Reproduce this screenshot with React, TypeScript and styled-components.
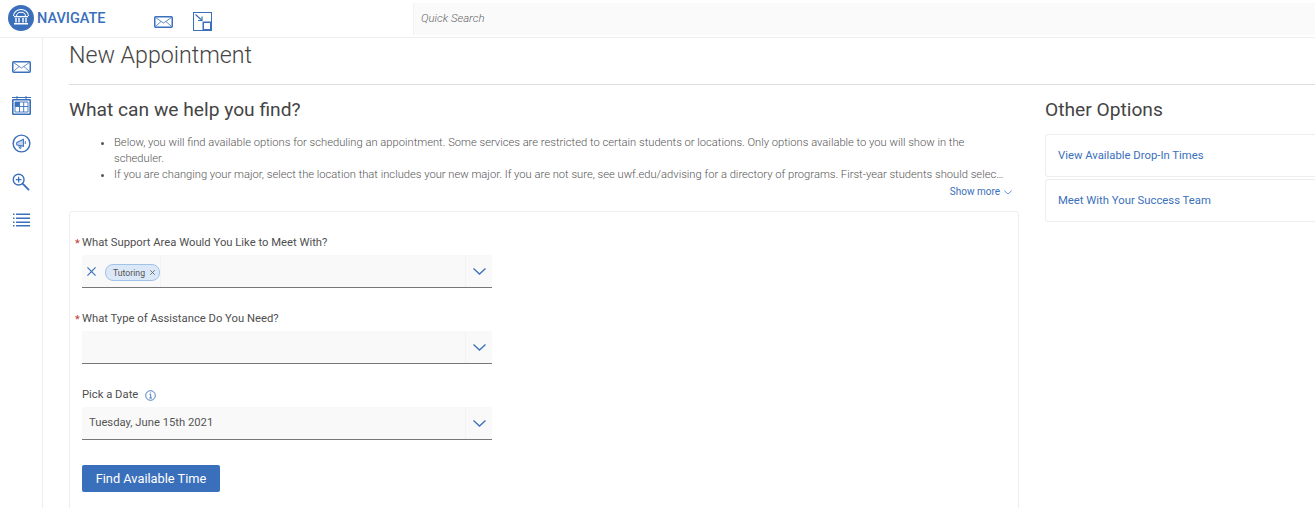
import React from 'react';
import styled, { createGlobalStyle } from 'styled-components';

const Global = createGlobalStyle`
  html, body {
    margin: 0;
    padding: 0;
    background: #fff;
    overflow: hidden;
  }
  body {
    font-family: Roboto, "Liberation Sans", sans-serif;
  }
`;

const BLUE = '#3a70bb';

const Page = styled.div`
  width: 1315px;
  height: 508px;
  overflow: hidden;
  display: flex;
  flex-direction: column;
`;

const TopBar = styled.header`
  height: 37px;
  flex: none;
  display: flex;
  align-items: flex-start;
  border-bottom: 1px solid #eeeeee;
`;

const Brand = styled.div`
  width: 154px;
  flex: none;
  height: 36px;
  padding: 5px 0 0 8px;
  box-sizing: border-box;
  display: flex;
  align-items: flex-start;
  gap: 3px;
`;

const BrandName = styled.span`
  font-size: 14.5px;
  font-weight: 500;
  color: ${BLUE};
  line-height: 27px;
`;

const TopIcons = styled.div`
  width: 259px;
  flex: none;
  display: flex;
  gap: 20px;
  padding-top: 12px;
  align-items: flex-start;
`;

const TopMail = styled.span`
  display: block;
  padding-top: 4px;
  line-height: 0;
`;

const Search = styled.div`
  width: 902px;
  height: 32px;
  margin-top: 3px;
  padding-left: 7px;
  box-sizing: border-box;
  background: #fafafa;
  border-left: 1px solid #f2f2f2;
  font-size: 11.4px;
  font-style: italic;
  font-weight: 300;
  color: #666;
  line-height: 31px;
`;

const Body = styled.div`
  flex: 1;
  display: flex;
  min-height: 0;
`;

const Rail = styled.nav`
  width: 42px;
  flex: none;
  border-right: 1px solid #eeeeee;
  padding-top: 19px;
  display: flex;
  flex-direction: column;
  align-items: center;
  gap: 18.3px;
`;

const RailSlot = styled.div`
  height: 20px;
  display: flex;
  align-items: center;
  justify-content: center;
`;

const Main = styled.main`
  flex: 1;
  padding: 0 0 0 26px;
  min-width: 0;
`;

const Title = styled.h1`
  margin: 0;
  height: 46px;
  border-bottom: 1px solid #dddddd;
  font-size: 23.2px;
  font-weight: 300;
  line-height: 34px;
  color: #444;
`;

const Columns = styled.div`
  display: flex;
  gap: 26px;
`;

const Left = styled.section`
  width: 950px;
  flex: none;
`;

const Right = styled.aside`
  flex: 1;
`;

const SectionTitle = styled.h2`
  margin: 0;
  padding-top: 13px;
  font-size: 19.2px;
  font-weight: 400;
  line-height: 24px;
  color: #444;
`;

const Notes = styled.ul`
  margin: 13px 0 0;
  padding: 0 30px 0 45px;
  font-size: 11.2px;
  font-weight: 300;
  line-height: 16px;
  color: #555;
`;

const Note = styled.li<{ $nowrap?: boolean }>`
  ${(p) => p.$nowrap && 'white-space: nowrap;'}
`;

const ShowMore = styled.div`
  display: flex;
  justify-content: flex-end;
  align-items: center;
  gap: 4px;
  padding-right: 7px;
  font-size: 10px;
  line-height: 14px;
  margin-top: 2px;
  color: ${BLUE};
`;

const FormCard = styled.div`
  margin-top: 12px;
  height: 320px;
  box-sizing: border-box;
  border: 1px solid #eeeeee;
  border-radius: 3px;
  padding: 23px 12px;
`;

const Field = styled.div<{ $gap?: number }>`
  width: 410px;
  margin-bottom: ${(p) => p.$gap ?? 23}px;
`;

const Label = styled.div<{ $required?: boolean }>`
  position: relative;
  font-size: 11.25px;
  line-height: 16px;
  color: #4f4f4f;
  display: flex;
  align-items: center;
  gap: 7px;
  ${(p) => p.$required && `
    &::before {
      content: '*';
      position: absolute;
      left: -7px;
      top: 1px;
      color: #c0392b;
      font-size: 11px;
    }
  `}
`;

const SelectBox = styled.div`
  height: 33px;
  margin-top: 4px;
  box-sizing: border-box;
  background: #f9f9f9;
  border-bottom: 1px solid #777;
  display: flex;
  align-items: center;
  font-size: 11.25px;
  color: #555;
`;

const SelectValue = styled.div`
  flex: 1;
  height: 100%;
  display: flex;
  align-items: center;
  padding: 0 0 1px 7px;
  box-sizing: border-box;
`;

const ClearArea = styled.div`
  height: 100%;
  display: flex;
  align-items: center;
  gap: 9px;
  padding-left: 5px;
  border-right: 1px solid #f3f3f3;
  box-sizing: border-box;
`;

const Chip = styled.span`
  height: 15px;
  margin-top: 3px;
  padding: 0 4px 0 7px;
  display: inline-flex;
  align-items: center;
  gap: 5px;
  background: #dbe8f8;
  border: 1px solid #a3c2ea;
  border-radius: 8px;
  font-size: 8.7px;
  color: #555;
`;

const Arrow = styled.div`
  width: 26px;
  height: 100%;
  flex: none;
  display: flex;
  align-items: center;
  justify-content: center;
  border-left: 1px solid #f3f3f3;
`;

const FindButton = styled.button`
  width: 138px;
  height: 27px;
  display: block;
  border: 0;
  border-radius: 2px;
  padding: 0 0 1px;
  background: ${BLUE};
  color: #fff;
  font-family: inherit;
  font-size: 12.8px;
  font-weight: 400;
`;

const OptionCard = styled.div`
  height: 43px;
  box-sizing: border-box;
  border: 1px solid #eeeeee;
  border-right: 0;
  border-radius: 3px 0 0 3px;
  padding-left: 12px;
  margin-bottom: 2px;
  display: flex;
  align-items: center;
  font-size: 11.3px;
  color: ${BLUE};
`;

const OptionList = styled.div`
  margin-top: 12px;
`;

const MailIcon = () => (
  <svg width="19" height="12" viewBox="0 0 19 12" fill="none" stroke={BLUE}>
    <rect x="0.75" y="0.75" width="17.5" height="10.5" rx="1" strokeWidth="1.5" />
    <path d="M1.5 1.5 9.5 7 17.5 1.5M1.5 10.5 7 5.5M17.5 10.5 12 5.5" strokeWidth="0.8" />
  </svg>
);

const LogoIcon = () => (
  <svg width="26" height="26" viewBox="0 0 26 26">
    <circle cx="13" cy="13" r="13" fill={BLUE} />
    <g fill="none" stroke="#fff" strokeWidth="1.1">
      <path d="M5.5 11a7.5 6.5 0 0 1 15 0" />
      <path d="M8.5 11a4.5 3.8 0 0 1 9 0" />
    </g>
    <rect x="6" y="11" width="14" height="1.3" fill="#fff" />
    <path d="M8 13v4.5M11 13v4.5M15 13v4.5M18 13v4.5" stroke="#fff" strokeWidth="1.4" />
    <rect x="6" y="18" width="14" height="1.5" fill="#fff" />
  </svg>
);

const ResizeIcon = () => (
  <svg width="19" height="19" viewBox="0 0 19 19" fill="none" stroke={BLUE}>
    <rect x="0.5" y="0.5" width="18" height="18" strokeWidth="1" />
    <rect x="10.25" y="10.25" width="7.5" height="7.5" strokeWidth="1.5" />
    <path d="M2.5 2.5 8.5 8" strokeWidth="1.2" />
    <path d="M5 8.5H9V4.5" strokeWidth="1.2" />
  </svg>
);

const CalendarIcon = () => (
  <svg width="19" height="19" viewBox="0 0 19 19" fill="none" stroke={BLUE}>
    <path d="M0 1.5H19M5 0V3.5M14 0V3.5" strokeWidth="1" />
    <rect x="0.8" y="3.8" width="17.4" height="14.4" rx="0.5" strokeWidth="1.6" />
    <rect x="3" y="6" width="4.5" height="4.5" fill={BLUE} stroke="none" />
    <path d="M3 6H16V16H3ZM3 10.5H16M7.5 6V16M11.7 6V16" strokeWidth="0.9" />
  </svg>
);

const MegaphoneIcon = () => (
  <svg width="19" height="19" viewBox="0 0 20 20" fill="none" stroke={BLUE}>
    <circle cx="10" cy="10" r="8.8" strokeWidth="1.5" />
    <path d="M5 9 12 5.5V13L5 11.5Z" fill="#c5d6ee" strokeWidth="1.1" />
    <path d="M7 12 8 15H9.5L9 12.5M14 7.5V10.5" strokeWidth="1" />
  </svg>
);

const ZoomIcon = () => (
  <svg width="18" height="18" viewBox="0 0 19 19" fill="none" stroke={BLUE}>
    <circle cx="7" cy="7" r="5.7" strokeWidth="1.5" />
    <path d="M7 4V10M4 7H10" strokeWidth="1.4" />
    <path d="M11.5 11.5 17.5 17.5" strokeWidth="2" strokeLinecap="round" />
  </svg>
);

const ListIcon = () => (
  <svg width="17" height="14" viewBox="0 0 17 14" fill={BLUE}>
    <rect x="0" y="0.5" width="1.5" height="1.5" />
    <rect x="3" y="0.5" width="14" height="1.5" />
    <rect x="0" y="4.5" width="1.5" height="1.5" />
    <rect x="3" y="4.5" width="14" height="1.5" />
    <rect x="0" y="8.5" width="1.5" height="1.5" />
    <rect x="3" y="8.5" width="14" height="1.5" />
    <rect x="0" y="12" width="1.5" height="1.5" />
    <rect x="3" y="12" width="14" height="1.5" />
  </svg>
);

const Cross = ({ size = 9, color = BLUE, weight = 1.3 }: { size?: number; color?: string; weight?: number }) => (
  <svg width={size} height={size} viewBox="0 0 10 10" fill="none" stroke={color} strokeWidth={weight}>
    <path d="M0.5 0.5 9.5 9.5M9.5 0.5 0.5 9.5" />
  </svg>
);

const Chevron = ({ width = 13, height = 7, weight = 1.3 }: { width?: number; height?: number; weight?: number }) => (
  <svg width={width} height={height} viewBox="0 0 13 7" fill="none" stroke={BLUE} strokeWidth={weight}>
    <path d="M0.5 0.5 6.5 6 12.5 0.5" />
  </svg>
);

const InfoIcon = () => (
  <svg width="11" height="11" viewBox="0 0 11 11" fill="none" stroke={BLUE}>
    <circle cx="5.5" cy="5.5" r="4.8" strokeWidth="0.9" />
    <path d="M4.5 4.5H5.7V8M4.3 8H7M5.5 2.5V3.4" strokeWidth="0.9" />
  </svg>
);

export default function App() {
  return (
    <Page>
      <Global />
      <TopBar>
        <Brand>
          <LogoIcon />
          <BrandName>NAVIGATE</BrandName>
        </Brand>
        <TopIcons>
          <TopMail>
            <MailIcon />
          </TopMail>
          <ResizeIcon />
        </TopIcons>
        <Search>Quick Search</Search>
      </TopBar>
      <Body>
        <Rail>
          <RailSlot><MailIcon /></RailSlot>
          <RailSlot><CalendarIcon /></RailSlot>
          <RailSlot><MegaphoneIcon /></RailSlot>
          <RailSlot><ZoomIcon /></RailSlot>
          <RailSlot><ListIcon /></RailSlot>
        </Rail>
        <Main>
          <Title>New Appointment</Title>
          <Columns>
            <Left>
              <SectionTitle>What can we help you find?</SectionTitle>
              <Notes>
                <Note>
                  Below, you will find available options for scheduling an appointment. Some services are restricted to certain students or locations. Only options available to you will show in the scheduler.
                </Note>
                <Note $nowrap>
                  If you are changing your major, select the location that includes your new major. If you are not sure, see uwf.edu/advising for a directory of programs. First-year students should selec…
                </Note>
              </Notes>
              <ShowMore>
                Show more <Chevron width={8} height={5} weight={1.2} />
              </ShowMore>
              <FormCard>
                <Field>
                  <Label $required>What Support Area Would You Like to Meet With?</Label>
                  <SelectBox>
                    <ClearArea>
                      <Cross />
                      <Chip>
                        Tutoring <Cross size={5} color="#555" weight={1.6} />
                      </Chip>
                    </ClearArea>
                    <SelectValue />
                    <Arrow><Chevron /></Arrow>
                  </SelectBox>
                </Field>
                <Field>
                  <Label $required>What Type of Assistance Do You Need?</Label>
                  <SelectBox>
                    <SelectValue />
                    <Arrow><Chevron /></Arrow>
                  </SelectBox>
                </Field>
                <Field $gap={25}>
                  <Label>
                    Pick a Date <InfoIcon />
                  </Label>
                  <SelectBox>
                    <SelectValue>Tuesday, June 15th 2021</SelectValue>
                    <Arrow><Chevron /></Arrow>
                  </SelectBox>
                </Field>
                <FindButton>Find Available Time</FindButton>
              </FormCard>
            </Left>
            <Right>
              <SectionTitle>Other Options</SectionTitle>
              <OptionList>
                <OptionCard>View Available Drop-In Times</OptionCard>
                <OptionCard>Meet With Your Success Team</OptionCard>
              </OptionList>
            </Right>
          </Columns>
        </Main>
      </Body>
    </Page>
  );
}
